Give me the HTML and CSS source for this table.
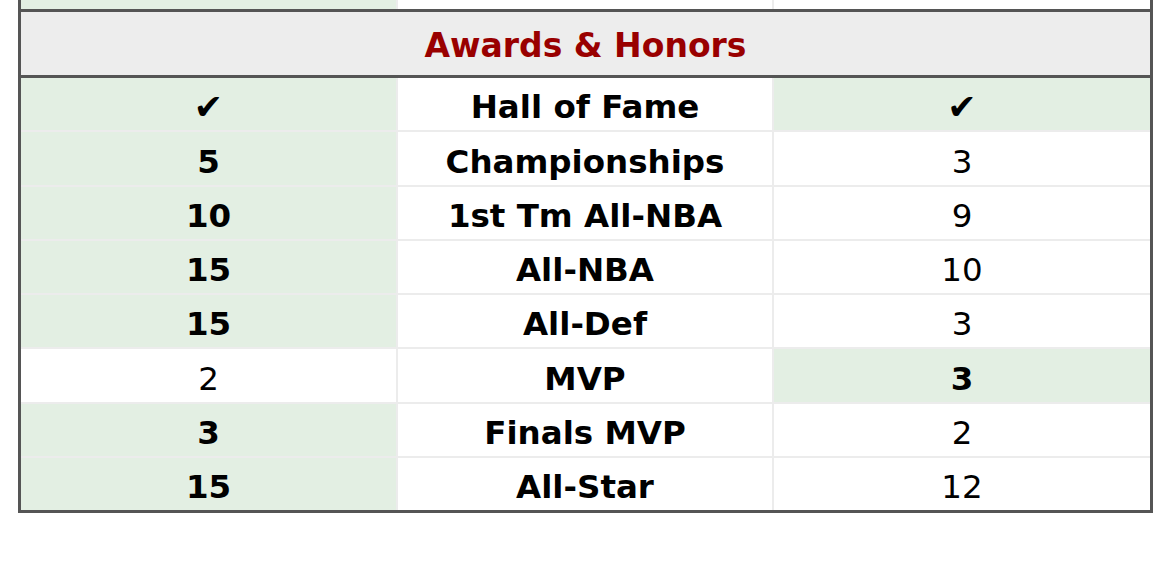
FILE: index.html
```html
<!DOCTYPE html>
<html>
<head>
<meta charset="utf-8">
<link rel="stylesheet" href="styles.css">
</head>
<body>
<div class="board">
  <div class="row prev">
    <div class="cell win"></div>
    <div class="cell"></div>
    <div class="cell"></div>
  </div>
  <div class="section">Awards &amp; Honors</div>
  <div class="rows">
    <div class="row"><div class="cell win b check">✔</div><div class="cell b">Hall of Fame</div><div class="cell win b check">✔</div></div>
    <div class="row"><div class="cell win b">5</div><div class="cell b">Championships</div><div class="cell">3</div></div>
    <div class="row"><div class="cell win b">10</div><div class="cell b">1st Tm All-NBA</div><div class="cell">9</div></div>
    <div class="row"><div class="cell win b">15</div><div class="cell b">All-NBA</div><div class="cell">10</div></div>
    <div class="row"><div class="cell win b">15</div><div class="cell b">All-Def</div><div class="cell">3</div></div>
    <div class="row"><div class="cell">2</div><div class="cell b">MVP</div><div class="cell win b">3</div></div>
    <div class="row"><div class="cell win b">3</div><div class="cell b">Finals MVP</div><div class="cell">2</div></div>
    <div class="row"><div class="cell win b">15</div><div class="cell b">All-Star</div><div class="cell">12</div></div>
  </div>
</div>
</body>
</html>
```

FILE: styles.css
```css
html, body {
  margin: 0;
  padding: 0;
  background: #ffffff;
}
body {
  font-family: "DejaVu Sans", Verdana, sans-serif;
  color: #000;
}
.board {
  margin-left: 18px;
  width: 1135px;
  box-sizing: border-box;
  border: 3px solid #555555;
  border-top: none;
}
.row {
  display: grid;
  grid-template-columns: 375px 374px 376px;
  column-gap: 2px;
  background: #ececec;
  height: 52px;
}
.prev {
  height: 9px;
}
.rows {
  display: flex;
  flex-direction: column;
  gap: 2px;
  background: #ececec;
}
.rows .row {
  height: 52.25px;
}
.cell {
  background: #ffffff;
  display: flex;
  align-items: center;
  justify-content: center;
  font-size: 32.5px;
  line-height: 1;
  padding-top: 7px;
  box-sizing: border-box;
}
.cell.win {
  background: #e3efe3;
}
.cell.b {
  font-weight: bold;
}
.cell.check {
  font-size: 35px;
  padding-top: 6px;
}
.section {
  background: #ededed;
  border-top: 3px solid #555555;
  border-bottom: 3px solid #555555;
  height: 69px;
  box-sizing: border-box;
  padding-top: 3px;
  display: flex;
  align-items: center;
  justify-content: center;
  color: #990000;
  font-weight: bold;
  font-size: 33px;
}
```
